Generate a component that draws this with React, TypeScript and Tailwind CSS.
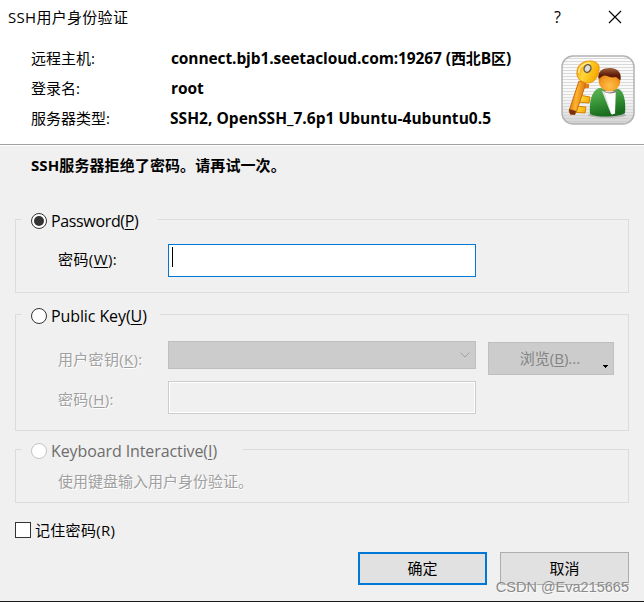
import type { ReactNode } from 'react';
import { clsx } from 'clsx';

const hostInfo = [
  {
    label: '远程主机:',
    value: <>connect.bjb1.seetacloud.com:19267 (<span className="text-[15px]">西北</span>B<span className="text-[15px]">区</span>)</>,
    valueClass: 'tracking-[-0.1px]',
  },
  { label: '登录名:', value: 'root', valueClass: 'tracking-[-0.1px]' },
  { label: '服务器类型:', value: 'SSH2, OpenSSH_7.6p1 Ubuntu-4ubuntu0.5', valueClass: '-ml-px tracking-[0.03px]' },
];

function UserKeyIcon() {
  return (
    <svg width="74" height="70" viewBox="0 0 74 70" className="block">
      <defs>
        <pattern id="stripes" width="4" height="3" patternUnits="userSpaceOnUse">
          <rect width="4" height="3" fill="#fafafa" />
          <rect width="4" height="1" fill="#d9d9d9" />
        </pattern>
        <linearGradient id="shade" x1="0" y1="0" x2="0" y2="1">
          <stop offset="0.4" stopColor="#ffffff" stopOpacity="0" />
          <stop offset="1" stopColor="#c4c4c4" stopOpacity="0.75" />
        </linearGradient>
        <linearGradient id="gold" x1="0" y1="0" x2="1" y2="0.4">
          <stop offset="0" stopColor="#f08a10" />
          <stop offset="0.45" stopColor="#ffd93a" />
          <stop offset="1" stopColor="#f7a800" />
        </linearGradient>
        <linearGradient id="shaft" x1="0" y1="0" x2="1" y2="0.2">
          <stop offset="0" stopColor="#c75a10" />
          <stop offset="0.5" stopColor="#ffb52a" />
          <stop offset="1" stopColor="#d9700c" />
        </linearGradient>
        <radialGradient id="face" cx="0.5" cy="0.75" r="0.7">
          <stop offset="0" stopColor="#ffc04a" />
          <stop offset="0.6" stopColor="#f49a22" />
          <stop offset="1" stopColor="#c96a0c" />
        </radialGradient>
        <linearGradient id="hair" x1="0" y1="0" x2="0" y2="1">
          <stop offset="0" stopColor="#a0603a" />
          <stop offset="0.6" stopColor="#5e1c08" />
        </linearGradient>
        <linearGradient id="jacket" x1="0" y1="0" x2="0.3" y2="1">
          <stop offset="0" stopColor="#63b55c" />
          <stop offset="0.45" stopColor="#3e9c3c" />
          <stop offset="1" stopColor="#176b1c" />
        </linearGradient>
      </defs>
      <rect x="1" y="1" width="72" height="68" rx="11" fill="url(#stripes)" />
      <rect x="1" y="1" width="72" height="68" rx="11" fill="url(#shade)" stroke="#b3b3b3" strokeWidth="1.5" />
      {/* person */}
      <ellipse cx="46" cy="60" rx="19" ry="3" fill="#888888" opacity="0.5" />
      <path d="M29 59 C28 48 30 36 38 33 L58 34 C63 37 65 46 64 58 C60 62 36 63 29 59 Z" fill="url(#jacket)" />
      <path d="M41 36 L55 36 L54 59 L50 59 Z" fill="#e4e2e4" />
      <path d="M44 38 L54 38 L54 57 L51 60 Z" fill="#ffffff" />
      <path d="M41 34 C45 39 52 38 56 34 L56 37 C51 39 46 39 42 36 Z" fill="#85807a" />
      <circle cx="48.500" cy="25.500" r="10.800" fill="url(#face)" />
      <path d="M37.500 24 C36 16 42 13 49 13 C57 13 61 18 59.500 25 C58 25 57 23 55 22 C49 24 45 19 42 21 C40 22 39 23 37.500 24 Z" fill="url(#hair)" />
      {/* key */}
      <path d="M18 40 L29 42 L28 48 L16 47 Z M14 51 L25 52 L24 58 L12 57 Z" fill="url(#gold)" stroke="#d78300" strokeWidth="1" />
      <path d="M17 29 L28 29 L28 33 L16 34 Z" fill="#e87b12" />
      <path d="M18 26 L25 28 L15 58 L10 60 L8 56 Z" fill="url(#shaft)" stroke="#ce6c16" strokeWidth="1" />
      <path d="M8 54 L15 56 L14 60 L9 59 Z" fill="#783010" />
      <path d="M16 17 C16 10 22 6 29 6 C36 6 39 10 38 15 C37 23 33 28 26 28 C20 27 15 23 16 17 Z" fill="url(#gold)" stroke="#ed940b" strokeWidth="1" />
      <path d="M18 18 C17 12 23 8 29 8" fill="none" stroke="#fff08a" strokeWidth="1.500" />
      <ellipse cx="26.500" cy="13.500" rx="3.300" ry="4" transform="rotate(25 26.500 13.500)" fill="#dedede" stroke="#75603c" strokeWidth="1.500" />
    </svg>
  );
}

function Radio({ checked, disabled }: { checked?: boolean; disabled?: boolean }) {
  return (
    <span
      className={clsx(
        'flex h-4 w-4 shrink-0 items-center justify-center rounded-full border bg-white',
        disabled ? 'border-[#c4c4c4]' : 'border-[#333333]',
      )}
    >
      {checked && <span className="h-[10px] w-[10px] rounded-full bg-[#333333]" />}
    </span>
  );
}

interface GroupProps {
  title: ReactNode;
  legendClass: string;
  className: string;
  checked?: boolean;
  disabled?: boolean;
  children: ReactNode;
}

function Group({ title, legendClass, className, checked, disabled, children }: GroupProps) {
  return (
    <section className={clsx('mx-[15px] border border-[#dcdcdc]', className)}>
      <div className={clsx('-mt-[13px] ml-[6px] flex h-7 items-center gap-1 bg-[#f0f0f0] pl-[9px] text-[16px]', legendClass)}>
        <Radio checked={checked} disabled={disabled} />
        <span className={clsx('whitespace-nowrap', disabled && 'text-[#6d6d6d]')}>{title}</span>
      </div>
      {children}
    </section>
  );
}

function Key({ children }: { children: string }) {
  return <span className="underline decoration-1 underline-offset-2">{children}</span>;
}

export default function App() {
  return (
    <div className="flex h-[602px] w-[644px] flex-col overflow-hidden border-b border-[#1a1a1a] bg-[#f0f0f0] font-['Open_Sans','Noto_Sans_CJK_SC',sans-serif] text-[15px] leading-5 text-black">
      <header className="h-[146px] shrink-0 border-b border-white bg-white">
        <div className="flex h-[145px] flex-col border-b border-[#a0a0a0]">
          <div className="mb-2 flex h-[33px] items-center pl-2">
            <h1 className="flex-1 tracking-[0.3px]">SSH用户身份验证</h1>
            <span className="w-[54px] text-[16px]">?</span>
            <svg width="14" height="14" viewBox="0 0 14 14" className="mr-[22px]">
              <path d="M1 1L13 13M13 1L1 13" stroke="#000" strokeWidth="1.1" />
            </svg>
          </div>
          <div className="flex pl-[31px] pt-[2px]">
            <dl className="w-[530px]">
              {hostInfo.map((item) => (
                <div key={item.label} className="flex h-[30px] items-center">
                  <dt className="w-[140px]">{item.label}</dt>
                  <dd className={clsx('whitespace-nowrap text-[15.5px] font-bold', item.valueClass)}>{item.value}</dd>
                </div>
              ))}
            </dl>
            <div className="pt-3">
              <UserKeyIcon />
            </div>
          </div>
        </div>
      </header>

      <p className="mb-px mt-[9px] h-5 pl-[31px] font-bold tracking-[0.1px]">SSH服务器拒绝了密码。请再试一次。</p>

      <Group title={<>Password(<Key>P</Key>)</>} checked className="mt-[43px] h-[74px] shrink-0" legendClass="w-[136px] tracking-[-0.35px]">
        <div className="mt-[9px] flex">
          <label className="w-[152px] pl-[42px] pt-[5px] tracking-[0.4px]">密码(<Key>W</Key>):</label>
          <div className="h-[33px] w-[308px] border border-[#0078d7] bg-white pl-[3px] pt-[2px]">
            <div className="h-5 w-px bg-black" />
          </div>
        </div>
      </Group>

      <Group title={<>Public Key(<Key>U</Key>)</>} className="mt-[21px] h-[117px] shrink-0" legendClass="w-[138px] tracking-[-0.1px]">
        <div className="mt-[11px] flex h-[40px] items-start">
          <label className="w-[152px] pl-[42px] pt-2 tracking-[0.3px] text-[#a0a0a0] [text-shadow:1px_1px_#fff]">用户密钥(<Key>K</Key>):</label>
          <div className="flex h-7 w-[308px] items-center justify-end border border-[#bfbfbf] bg-[#cccccc] pr-[5px]">
            <svg width="10" height="6" viewBox="0 0 10 6">
              <path d="M0.500 0.500L5 5L9.500 0.500" fill="none" stroke="#a0a0a0" />
            </svg>
          </div>
          <button disabled className="relative ml-3 mt-px h-[33px] w-[126px] border border-[#bfbfbf] bg-[#cccccc] pb-[2px] pr-[2px] text-[#838383]">
            浏览(<Key>B</Key>)...
            <svg width="5" height="3" viewBox="0 0 5 3" className="absolute bottom-[6px] right-[5px]" shapeRendering="crispEdges">
              <path d="M0 0H5V1H4V2H3V3H2V2H1V1H0Z" fill="#000" />
            </svg>
          </button>
        </div>
        <div className="flex">
          <label className="w-[152px] pl-[42px] pt-2 tracking-[0.3px] text-[#a0a0a0] [text-shadow:1px_1px_#fff]">密码(<Key>H</Key>):</label>
          <div className="h-[33px] w-[308px] border border-[#cccccc] bg-[#f0f0f0] ring-1 ring-inset ring-white" />
        </div>
      </Group>

      <Group title={<>Keyboard Interactive(<Key>I</Key>)</>} disabled className="mt-[18px] h-[54px] shrink-0" legendClass="w-[221px] tracking-[-0.1px]">
        <p className="mt-1 pl-[42px] leading-6 text-[#a0a0a0] [text-shadow:1px_1px_#fff]">使用键盘输入用户身份验证。</p>
      </Group>

      <div className="ml-[15px] mt-[17px] flex h-5 items-center gap-1">
        <span className="h-4 w-4 border border-[#333333] bg-white" />
        <span className="tracking-[0.3px]">记住密码(R)</span>
      </div>

      <footer className="relative mt-3 flex justify-end gap-[13px] pr-[15px]">
        <button className="h-[33px] w-[129px] border-2 border-[#0078d7] bg-[#e1e1e1] pb-[2px]">确定</button>
        <button className="h-[33px] w-[129px] border border-[#adadad] bg-[#e1e1e1] pb-[2px]">取消</button>
        <span className="absolute right-[15px] top-[25px] font-['Liberation_Sans',sans-serif] text-[14.5px] tracking-[0] text-[#8a8a8a] [text-shadow:1px_1px_#ffffffaa]">
          CSDN @Eva215665
        </span>
      </footer>
    </div>
  );
}
